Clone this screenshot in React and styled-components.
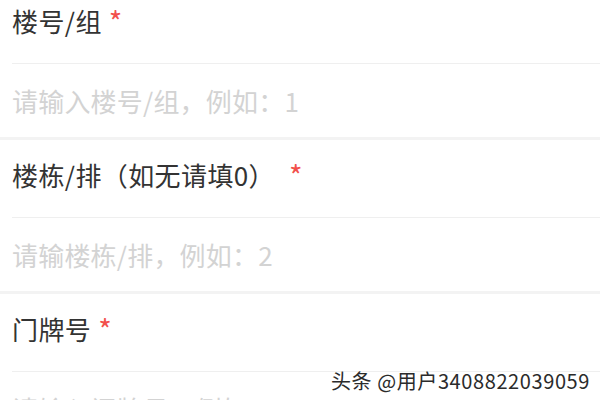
import styled, { createGlobalStyle } from "styled-components";

const Global = createGlobalStyle`
  html, body {
    margin: 0;
    padding: 0;
    background: #fff;
    overflow: hidden;
  }
  body {
    font-family: "Noto Sans CJK SC", "Noto Sans", sans-serif;
  }
`;

const Page = styled.div`
  position: relative;
  width: 600px;
  height: 400px;
  overflow: hidden;
  background: #fff;
`;

const Form = styled.div`
  margin-top: -14px;
  display: flex;
  flex-direction: column;
`;

const Section = styled.div`
  display: flex;
  flex-direction: column;
  border-bottom: 3px solid #f3f3f3;
`;

const LabelRow = styled.div`
  margin-left: 12px;
  display: flex;
  align-items: flex-start;
  padding-top: 17px;
  height: 60px;
  border-bottom: 1px solid #efefef;
`;

const Label = styled.span`
  font-size: 26px;
  line-height: 36px;
  color: #333;
  letter-spacing: 0.4px;
`;

const Star = styled.span`
  margin-left: ${(p) => p.$gap || 7}px;
  margin-top: 2px;
  font-size: 29px;
  line-height: 30px;
  color: #f2504c;
`;

const InputRow = styled.div`
  height: 73px;
  padding-left: 12px;
  display: flex;
  align-items: center;
`;

const Placeholder = styled.span`
  font-size: 26px;
  line-height: 36px;
  color: #d3d3d3;
  letter-spacing: 0.2px;
`;

const Watermark = styled.div`
  position: absolute;
  right: 10px;
  bottom: 7px;
  font-size: 20px;
  line-height: 24px;
  color: #2b2b2b;
  text-shadow: 0 0 2px #fff, 0 0 1px #fff;
  letter-spacing: 0.6px;
`;

const fields = [
  { label: "楼号/组", hint: "请输入楼号/组，例如：1" },
  { label: "楼栋/排（如无请填0）", hint: "请输楼栋/排，例如：2", gap: 14 },
  { label: "门牌号", hint: "请输入门牌号，例如：2503" },
];

export default function App() {
  return (
    <Page>
      <Global />
      <Form>
        {fields.map((f) => (
          <Section key={f.label}>
            <LabelRow>
              <Label>{f.label}</Label>
              <Star $gap={f.gap}>*</Star>
            </LabelRow>
            <InputRow>
              <Placeholder>{f.hint}</Placeholder>
            </InputRow>
          </Section>
        ))}
      </Form>
      <Watermark>头条 @用户3408822039059</Watermark>
    </Page>
  );
}
